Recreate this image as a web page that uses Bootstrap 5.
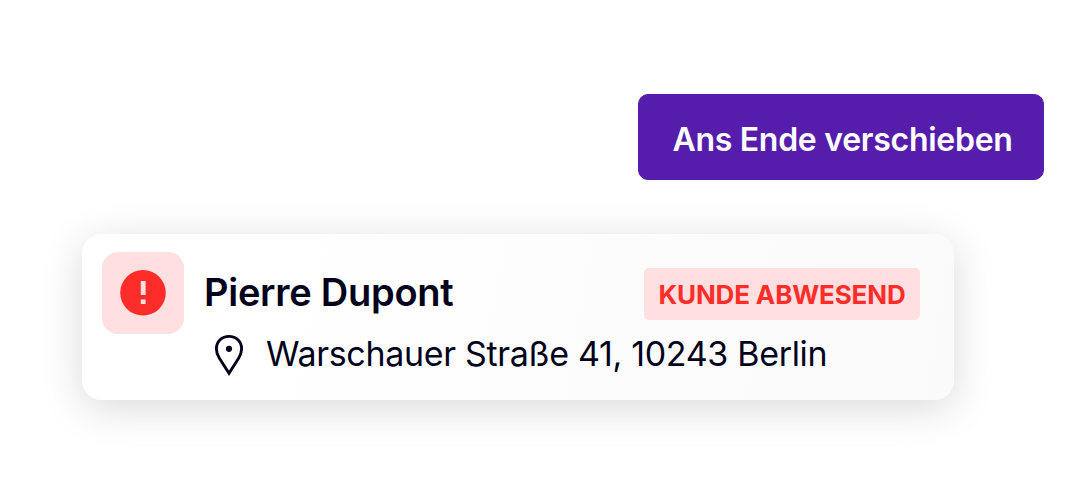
<!DOCTYPE html>
<html lang="de">
<head>
<meta charset="utf-8">
<meta name="viewport" content="width=device-width, initial-scale=1">
<title>Kunde abwesend</title>
<link href="https://cdn.jsdelivr.net/npm/bootstrap@5.3.0/dist/css/bootstrap.min.css" rel="stylesheet">
<style>
body{font-family:Inter,"Liberation Sans",sans-serif;background:#fff;color:#03021c}
.screen{height:494px;padding:94px 24px 0 82px;gap:54px;overflow:hidden}
.btn-move{--bs-btn-bg:#561cab;--bs-btn-border-color:#561cab;--bs-btn-color:#fff;--bs-btn-hover-bg:#4a1795;--bs-btn-hover-color:#fff;width:406px;height:86px;border-radius:10px;font-size:32px;font-weight:600;letter-spacing:-.28px;line-height:48px;padding:5px 0 0 3px;white-space:nowrap}
.stop-card{width:872px;height:166px;border:0;border-radius:20px;background:linear-gradient(100deg,#fff 20%,#fafafa 100%);box-shadow:0 8px 42px rgba(0,0,0,.15);padding:18px 34px 0 20px;gap:20px}
.alert-tile{width:82px;height:82px;border-radius:16px;background:#ffdfdf}
.stop-name{font-size:38px;font-weight:600;letter-spacing:-.27px;line-height:49px;padding-bottom:3px;color:#03021c}
.state-tag{width:276px;height:52px;border-radius:5px;background:#ffdfdf;color:#ff2d2a;font-size:26px;font-weight:700;letter-spacing:-.14px;line-height:52px;padding:1px 0 0;white-space:nowrap}
.stop-body{padding-top:16px}
.address-line{font-size:34px;letter-spacing:-.32px;line-height:44px;margin-top:12px;padding-left:10px;gap:22px;white-space:nowrap}
</style>
</head>
<body>
<main class="screen d-flex flex-column">
  <button type="button" class="btn btn-move align-self-end">Ans Ende verschieben</button>
  <article class="card stop-card flex-row align-items-start">
    <div class="alert-tile d-flex align-items-center justify-content-center flex-shrink-0">
      <svg width="46" height="46" viewBox="0 0 46 46" aria-hidden="true"><circle cx="23" cy="22.8" r="22.8" fill="#ff2d2a"/><path d="M20.8 11h4.8v14h-4.8zM20.8 29.5h4.8v4.5h-4.8z" fill="#ffdfdf"/></svg>
    </div>
    <div class="stop-body flex-grow-1">
      <div class="d-flex justify-content-between">
        <h1 class="stop-name mb-0"><span>Pierre Dupont</span></h1>
        <span class="badge state-tag"><span>KUNDE ABWESEND</span></span>
      </div>
      <div class="address-line d-flex align-items-center">
        <svg class="flex-shrink-0" width="30" height="44" viewBox="0 0 30 44" aria-hidden="true"><path d="M15 41.3L5.4 26.2C3.5 23.2 2.4 19.8 2.4 16.7C2.4 9.2 8 4.4 15 4.4S27.6 9.2 27.6 16.7C27.6 19.8 26.5 23.2 24.6 26.2Z" fill="none" stroke="#03021c" stroke-width="2.9"/><circle cx="15" cy="16.8" r="3.1" fill="#03021c"/></svg>
        <span>Warschauer Straße 41, 10243 Berlin</span>
      </div>
    </div>
  </article>
</main>
<script src="https://cdn.jsdelivr.net/npm/bootstrap@5.3.0/dist/js/bootstrap.bundle.min.js"></script>
</body>
</html>
